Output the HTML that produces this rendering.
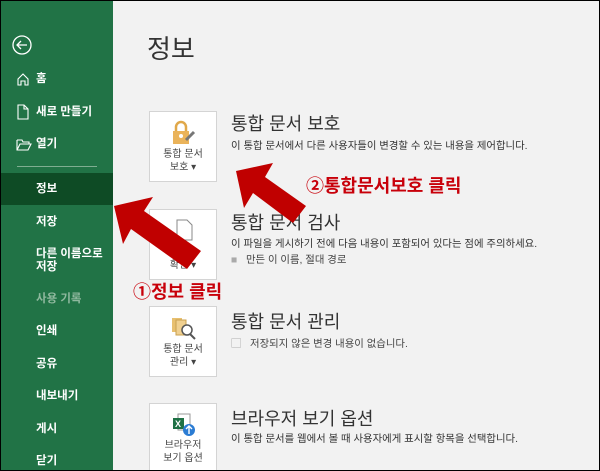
<!DOCTYPE html>
<html><head><meta charset="utf-8"><style>
body{margin:0;width:600px;height:471px;overflow:hidden;font-family:"Liberation Sans","Noto Sans CJK KR",sans-serif;}
#f{position:absolute;left:0;top:0;width:598px;height:469px;border:1px solid #000;background:#f2f2f2;overflow:hidden}
#sb{position:absolute;left:0;top:0;width:112px;height:469px;background:#217346}
.it{position:absolute;left:35px;color:#fff;font-size:11.5px;font-weight:bold;line-height:13px}
.ic{position:absolute;left:15px}
.h{position:absolute;left:230px;font-size:18px;color:#333;white-space:nowrap}
.d{position:absolute;left:230px;font-size:10.4px;color:#333;white-space:nowrap}
.bx{position:absolute;left:148px;width:66px;height:69px;background:#fff;border:1px solid #d4d4d4;text-align:center;font-size:10px;color:#444;line-height:13px}
.bx span{position:absolute;left:0;right:0;bottom:7px}
.red{position:absolute;color:#c8000a;font-weight:bold;font-size:18px;white-space:nowrap}
</style></head><body><div id="f">
<div id="sb">
<svg class="ic" style="left:10px;top:33px" width="22" height="22"><circle cx="11" cy="11" r="9" fill="none" stroke="#fff" stroke-width="1.3"/><path d="M6 11h10M10 7l-4 4 4 4" fill="none" stroke="#fff" stroke-width="1.3"/></svg>
<svg class="ic" style="top:71px" width="14" height="14"><path d="M2 7L7 2l5 5v6H9V9H5v4H2z" fill="none" stroke="#fff" stroke-width="1.1"/></svg>
<div class="it" style="top:72px">홈</div>
<svg class="ic" style="top:103px" width="14" height="16"><path d="M2 1h6l4 4v10H2zM8 1v4h4" fill="none" stroke="#fff" stroke-width="1.1"/></svg>
<div class="it" style="top:105px">새로 만들기</div>
<svg class="ic" style="top:137px" width="16" height="14"><path d="M1 2h5l1 2h6v2M1 2v10h11l3-6H4L1 12" fill="none" stroke="#fff" stroke-width="1.1"/></svg>
<div class="it" style="top:137px">열기</div>
<div style="position:absolute;left:16px;top:165px;width:80px;height:1px;background:#7fae91"></div>
<div style="position:absolute;left:0;top:172px;width:112px;height:32px;background:#0e4b25"></div>
<div class="it" style="top:182px">정보</div>
<div class="it" style="top:215px">저장</div>
<div class="it" style="top:247px">다른 이름으로<br>저장</div>
<div class="it" style="top:292px;color:#8fb89e">사용 기록</div>
<div class="it" style="top:324px">인쇄</div>
<div class="it" style="top:357px">공유</div>
<div class="it" style="top:389px">내보내기</div>
<div class="it" style="top:422px">게시</div>
<div class="it" style="top:454px">닫기</div>
</div>
<div style="position:absolute;left:146px;top:28px;font-size:26px;color:#333">정보</div>

<div class="bx" style="top:110px"><svg style="position:absolute;left:20px;top:8px" width="28" height="26"><path d="M6 11V7a5 5 0 0 1 10 0v4" fill="none" stroke="#e0a84a" stroke-width="2.5"/><rect x="3" y="11" width="16" height="13" fill="#eab35a"/><circle cx="11" cy="16" r="2" fill="#fff"/><path d="M16 20l8-8" stroke="#777" stroke-width="3"/></svg><span>통합 문서<br>보호 ▾</span></div>
<div class="bx" style="top:208px"><svg style="position:absolute;left:24px;top:8px" width="20" height="24"><path d="M3 2h10l5 5v15H3z" fill="#fff" stroke="#888"/></svg><span>문제<br>확인 ▾</span></div>
<div class="bx" style="top:305px"><svg style="position:absolute;left:20px;top:8px" width="28" height="26"><rect x="2" y="3" width="10" height="14" fill="#e8c070"/><rect x="6" y="5" width="10" height="15" fill="#f0d090" stroke="#c9a050"/><circle cx="17" cy="15" r="5" fill="#fff" stroke="#555" stroke-width="1.5"/><path d="M20 19l5 5" stroke="#555" stroke-width="2"/></svg><span>통합 문서<br>관리 ▾</span></div>
<div class="bx" style="top:402px;height:80px"><svg style="position:absolute;left:20px;top:8px" width="28" height="26"><rect x="8" y="2" width="12" height="16" fill="#fff" stroke="#999"/><rect x="3" y="6" width="11" height="11" fill="#1e7145"/><text x="5" y="15" font-size="9" fill="#fff" font-family="Liberation Sans" font-weight="bold">X</text><circle cx="19" cy="18" r="6" fill="#2b7cd3"/><path d="M19 22v-7M16 17l3-3 3 3" fill="none" stroke="#fff" stroke-width="1.4"/></svg><span style="bottom:auto;top:35px">브라우저<br>보기 옵션</span></div>

<div class="h" style="top:109px">통합 문서 보호</div>
<div class="d" style="top:136px">이 통합 문서에서 다른 사용자들이 변경할 수 있는 내용을 제어합니다.</div>
<div class="h" style="top:208px">통합 문서 검사</div>
<div class="d" style="top:234px">이 파일을 게시하기 전에 다음 내용이 포함되어 있다는 점에 주의하세요.</div>
<div class="d" style="top:250px;color:#444"><span style="color:#aaa">■</span>&nbsp;&nbsp; 만든 이 이름, 절대 경로</div>
<div class="h" style="top:307px">통합 문서 관리</div>
<div class="d" style="top:334px;color:#444"><span style="color:#999">▢</span>&nbsp;&nbsp; 저장되지 않은 변경 내용이 없습니다.</div>
<div class="h" style="top:404px">브라우저 보기 옵션</div>
<div class="d" style="top:429px">이 통합 문서를 웹에서 볼 때 사용자에게 표시할 항목을 선택합니다.</div>

<svg style="position:absolute;left:0;top:0" width="600" height="471">
<polygon points="113,205 152,196 143,210 200,250 186,268 130,228 122,243" fill="#c00000"/>
<polygon points="235,170 272,162 264,176 305,205 292,222 252,192 243,207" fill="#c00000"/>
</svg>
<div class="red" style="left:132px;top:277px">①정보 클릭</div>
<div class="red" style="left:305px;top:171px">②통합문서보호 클릭</div>
</div></body></html>
